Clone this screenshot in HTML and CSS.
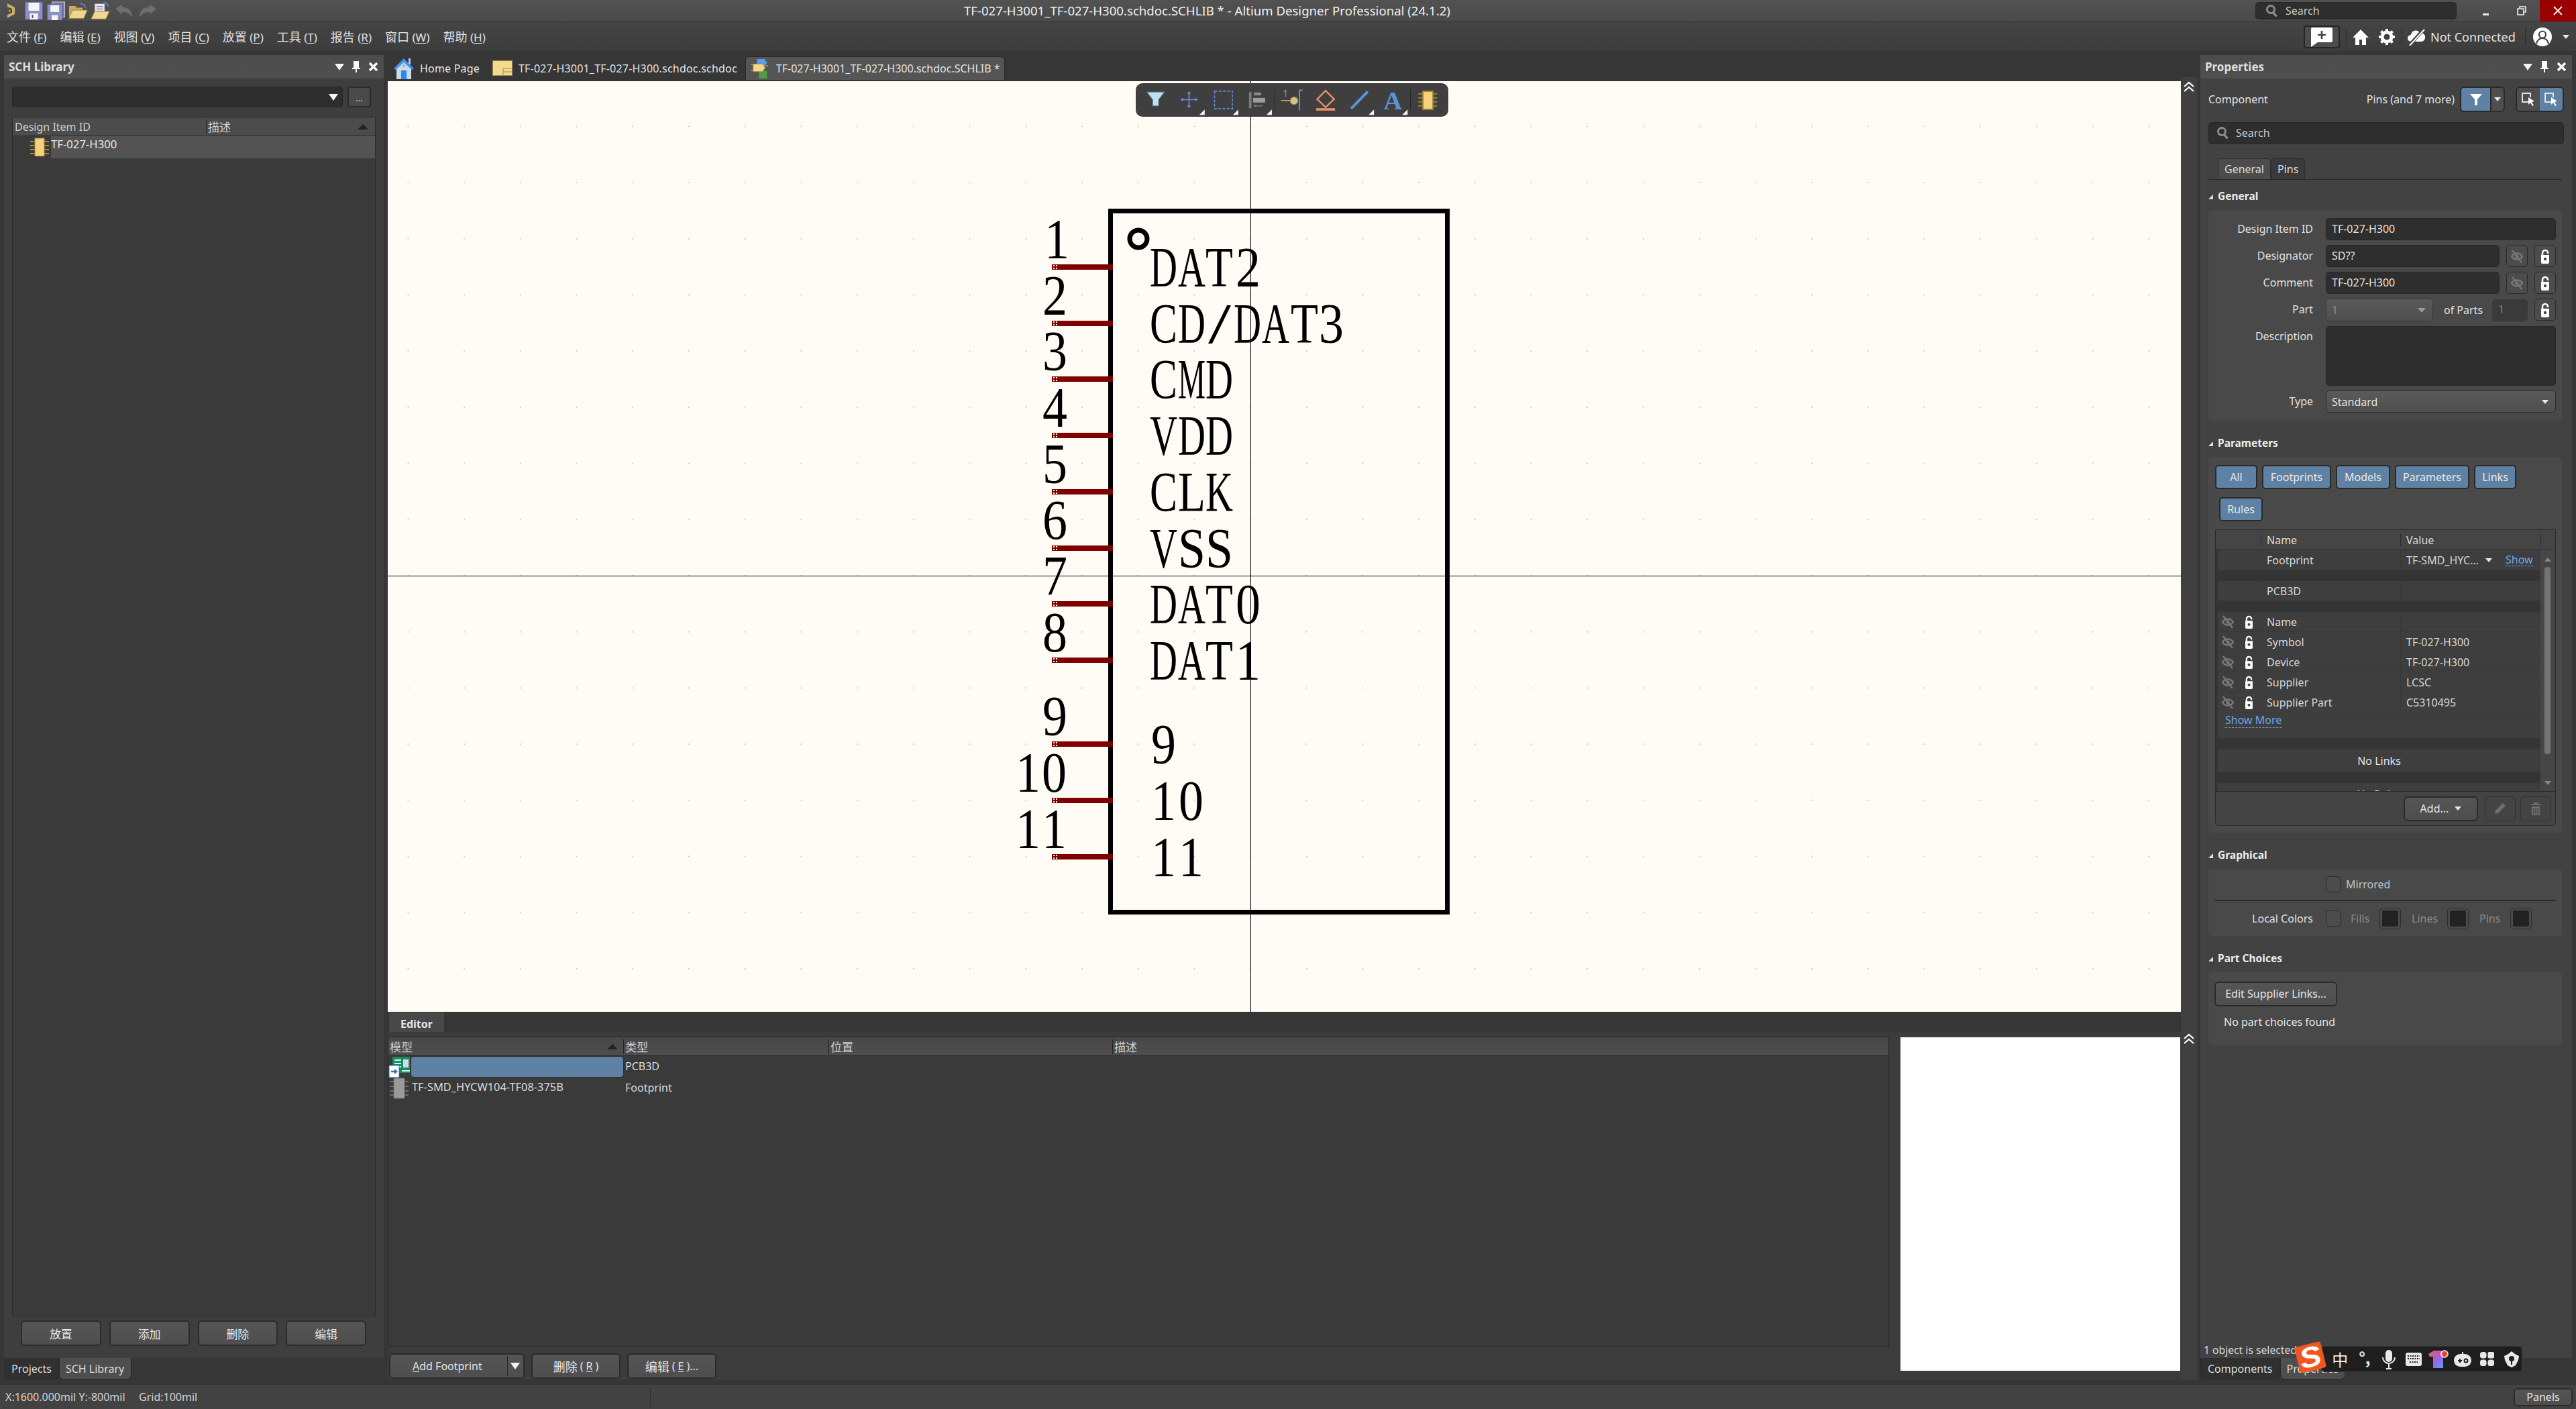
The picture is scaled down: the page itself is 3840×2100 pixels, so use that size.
FILE: index.html
```html
<!DOCTYPE html>
<html lang="en">
<head>
<meta charset="utf-8">
<title>Altium Designer</title>
<link rel="stylesheet" href="styles.css">
</head>
<body>
<svg class="defs" width="0" height="0" aria-hidden="true">
  <symbol id="lock" viewBox="0 0 14 22"><path d="M3 10V6a4 4 0 0 1 8 0v1" fill="none" stroke="#fff" stroke-width="2.6"/><path d="M1 9h12v11a2 2 0 0 1-2 2H3a2 2 0 0 1-2-2z" fill="#fff"/><circle cx="7" cy="15" r="2.2" fill="#444"/></symbol>
  <symbol id="eye" viewBox="0 0 18 20"><path d="M1 10c4-6 12-6 16 0-4 6-12 6-16 0z" fill="none" stroke="#777" stroke-width="2.4"/><circle cx="9" cy="10" r="2.6" fill="#777"/><path d="M2 1l14 18" stroke="#777" stroke-width="2.4"/></symbol>
  <symbol id="search" viewBox="0 0 18 20"><circle cx="8" cy="8" r="5.5" fill="none" stroke="#8c8c8c" stroke-width="3"/><path d="M11.5 12.5l5 6" stroke="#8c8c8c" stroke-width="3.4"/></symbol>
  <symbol id="pick" viewBox="0 0 22 22"><path d="M11 15H2V2h12v6" fill="none" stroke="#e4e4e4" stroke-width="2"/><path d="M11 8l9 6-4 1 3 5-2 1-3-5-3 3z" fill="#fff"/></symbol>
</svg>

<div class="app">
  <header class="titlebar">
    <div class="qat">
      <svg class="logo" viewBox="0 0 17 24"><path d="M3 1l11 6v10L3 23v-5l7-3V9L3 6z" fill="#c9b06a"/><path d="M5 10l3 2-3 2z" fill="#c9b06a"/></svg>
      <svg class="qi" viewBox="0 0 28 28"><rect x="1" y="1" width="26" height="26" fill="#8d90c6" stroke="#5c5f90"/><rect x="6" y="2" width="16" height="12" fill="#f4f4f4"/><rect x="8" y="18" width="12" height="9" fill="#f4f4f4"/><rect x="11" y="20" width="2" height="5" fill="#555"/></svg>
      <svg class="qi" viewBox="0 0 30 30"><rect x="9" y="1" width="20" height="24" fill="#777aa8" stroke="#d8d8e4"/><rect x="1" y="5" width="24" height="25" fill="#8d90c6" stroke="#5c5f90"/><rect x="6" y="6" width="14" height="11" fill="#f4f4f4"/><rect x="8" y="22" width="10" height="8" fill="#f4f4f4"/></svg>
      <svg class="qi" viewBox="0 0 33 28"><path d="M1 27V6h11l2 3h10v18z" fill="#c9a860"/><path d="M1 27L7 13h25l-6 14z" fill="#f0d690" stroke="#9a8040"/><path d="M20 2q8 0 9 8" fill="none" stroke="#5a8cc0" stroke-width="2"/></svg>
      <svg class="qi" viewBox="0 0 33 30"><rect x="7" y="3" width="17" height="20" fill="#e8e8f0" stroke="#7a7a90"/><path d="M10 8h11M10 12h11M10 16h11" stroke="#6a7aa0" stroke-width="1.4"/><path d="M1 29l6-13h25l-6 13z" fill="#f0d690" stroke="#9a8040"/><path d="M22 1q7 0 8 7" fill="none" stroke="#5a8cc0" stroke-width="2"/></svg>
      <svg class="qi dim" viewBox="0 0 30 24"><path d="M1 9l11-8v5q16 1 16 17-5-9-16-9v4z" fill="#6f6f6f"/></svg>
      <svg class="qi dim" viewBox="0 0 30 24"><path d="M29 9L18 1v5Q2 7 2 23q5-9 16-9v4z" fill="#6f6f6f"/></svg>
    </div>
    <div class="wintitle">TF-027-H3001_TF-027-H300.schdoc.SCHLIB * - Altium Designer Professional (24.1.2)</div>
    <div class="topsearch"><svg class="ic18"><use href="#search"/></svg><span>Search</span></div>
    <div class="winctl">
      <div class="winbtn"><span class="minbar"></span></div>
      <div class="winbtn"><svg class="ic14" viewBox="0 0 14 14"><path d="M4 3V1h9v8h-3M1 4h9v9H1z" fill="none" stroke="#eee" stroke-width="1.6"/></svg></div>
      <div class="winbtn close"><svg class="ic14" viewBox="0 0 14 14"><path d="M1 1l12 12M13 1L1 13" stroke="#fff" stroke-width="1.8"/></svg></div>
    </div>
  </header>

  <nav class="menubar">
    <div class="menu">
      <span><b class="zh">文件</b> (<u>F</u>)</span>
      <span><b class="zh">编辑</b> (<u>E</u>)</span>
      <span><b class="zh">视图</b> (<u>V</u>)</span>
      <span><b class="zh">项目</b> (<u>C</u>)</span>
      <span><b class="zh">放置</b> (<u>P</u>)</span>
      <span><b class="zh">工具</b> (<u>T</u>)</span>
      <span><b class="zh">报告</b> (<u>R</u>)</span>
      <span><b class="zh">窗口</b> (<u>W</u>)</span>
      <span><b class="zh">帮助</b> (<u>H</u>)</span>
    </div>
    <div class="acct">
      <div class="newbtn"><svg width="34" height="30" viewBox="0 0 34 30"><path d="M3 1h28a2 2 0 0 1 2 2v18a2 2 0 0 1-2 2H11L1 30V3a2 2 0 0 1 2-2z" fill="#fff"/><path d="M17 6v12M11 12h12" stroke="#444" stroke-width="2.6"/></svg></div>
      <i class="vsep"></i>
      <svg class="acct-home" viewBox="0 0 24 24"><path d="M12 1L0 13h4v11h6v-8h4v8h6V13h4z" fill="#fff"/></svg>
      <svg class="acct-gear" viewBox="0 0 24 24"><circle cx="12" cy="12" r="7" fill="none" stroke="#fff" stroke-width="5"/><path d="M12 0v5M12 19v5M0 12h5M19 12h5M3.5 3.5L7 7M17 17l3.500 3.500M20.500 3.500L17 7M7 17l-3.500 3.500" stroke="#fff" stroke-width="4"/></svg>
      <i class="vsep"></i>
      <svg class="acct-cloud" viewBox="0 0 26 26"><path d="M5 20a5 5 0 0 1 0-10 7 7 0 0 1 13-3 6 6 0 0 1 3 13z" fill="#fff"/><path d="M2 26L24 2" stroke="#424242" stroke-width="5"/><path d="M3 26L25 2" stroke="#fff" stroke-width="2"/></svg>
      <span class="notconn">Not Connected</span>
      <i class="vsep"></i>
      <svg class="acct-user" viewBox="0 0 28 28"><circle cx="14" cy="14" r="14" fill="#fff"/><circle cx="14" cy="10.500" r="5" fill="none" stroke="#424242" stroke-width="2.200"/><path d="M5 24q2-8 9-8t9 8" fill="none" stroke="#424242" stroke-width="2.200"/></svg>
      <span class="caret acct-caret"></span>
    </div>
  </nav>

  <main class="workspace">
    <!-- left panel -->
    <section class="leftpanel">
      <div class="phead"><strong>SCH Library</strong><span class="phead-ic"><span class="caret big"></span><svg width="12" height="17" viewBox="0 0 12 17"><path d="M2 0h8v10h2v2H7v5H5v-5H0v-2h2z" fill="#fff"/></svg><svg width="15" height="15" viewBox="0 0 15 15"><path d="M2 2l11 11M13 2L2 13" stroke="#fff" stroke-width="3.400"/></svg></span></div>
      <div class="lbody">
        <div class="lfilter"><div class="lselect"><span class="caret big"></span></div><div class="dots">...</div></div>
        <div class="ltable">
          <div class="lthead"><span class="th-a">Design Item ID</span><span class="th-b zh16">描述</span><span class="sortup"></span></div>
          <div class="ltrow">
            <svg class="chip" viewBox="0 0 28 28"><path d="M0 6h28M0 12h28M0 18h28M0 24h28" stroke="#a08840" stroke-width="2"/><rect x="7" y="1" width="14" height="27" fill="#f6d27c" stroke="#a08840"/></svg>
            <span class="ltname">TF-027-H300</span>
          </div>
        </div>
        <div class="lbtns"><button class="btn zh16">放置</button><button class="btn zh16">添加</button><button class="btn zh16">删除</button><button class="btn zh16">编辑</button></div>
      </div>
      <div class="btabs"><span class="btab">Projects</span><span class="btab on">SCH Library</span></div>
    </section>

    <!-- centre -->
    <section class="center">
      <div class="doctabs">
        <div class="dtab">
          <svg class="ic-home" viewBox="0 0 30 33"><rect x="22" y="2" width="3" height="9" fill="#bcd"/><path d="M4 15L15 5l11 10v18H4z" fill="#c9dbe8"/><path d="M0 17L15 2l15 15-3 2L15 8 3 19z" fill="#3f92ee"/><rect x="11" y="20" width="8" height="13" fill="#2a86f0"/><circle cx="15" cy="13" r="1.600" fill="#7f9fb8"/></svg>
          <span>Home Page</span>
        </div>
        <div class="dtab">
          <svg class="ic-doc" viewBox="0 0 30 23"><rect x=".5" y=".5" width="29" height="22" fill="#f2d98c" stroke="#a08c50"/><path d="M16 22V12h14M16 17h14" fill="none" stroke="#a08c50"/></svg>
          <span>TF-027-H3001_TF-027-H300.schdoc.schdoc</span>
        </div>
        <div class="dtab on">
          <svg class="ic-lib" viewBox="0 0 32 32"><rect x="13" y="20" width="13" height="12" fill="#4ea040"/><path d="M10 1h12l4 6-4 6H10z" fill="#5a9cf0"/><path d="M0 10h6M0 19h6M24 12h4" stroke="#a89040" stroke-width="2"/><path d="M4 9h15l4 6-4 6H4z" fill="#f4d98a" stroke="#a89040"/></svg>
          <span>TF-027-H3001_TF-027-H300.schdoc.SCHLIB *</span>
        </div>
      </div>

      <div class="canvas">
        <svg class="sheet" viewBox="578 121 2673 1387" width="2673" height="1387">
          <defs><pattern id="grid" patternUnits="userSpaceOnUse" x="1863" y="857" width="83.700" height="83.700"><rect width="2" height="2" fill="#cfcec8"/></pattern></defs>
          <rect x="578" y="121" width="2673" height="1387" fill="url(#grid)"/>
          <rect x="1655.500" y="314.500" width="502" height="1045" fill="none" stroke="#000" stroke-width="7"/>
          <circle cx="1697" cy="356" r="13" fill="none" stroke="#000" stroke-width="7"/>
          <g class="pins">
            <path d="M1568 398h91M1568 482h91M1568 565h91M1568 649h91M1568 733h91M1568 817h91M1568 900h91M1568 984h91M1568 1109h91M1568 1193h91M1568 1277h91"/>
          </g>
          <path class="hots" d="M1570 395h2v2h-2zM1574 395h2v2h-2zM1570 399h2v2h-2zM1574 399h2v2h-2zM1570 479h2v2h-2zM1574 479h2v2h-2zM1570 483h2v2h-2zM1574 483h2v2h-2zM1570 562h2v2h-2zM1574 562h2v2h-2zM1570 566h2v2h-2zM1574 566h2v2h-2zM1570 646h2v2h-2zM1574 646h2v2h-2zM1570 650h2v2h-2zM1574 650h2v2h-2zM1570 730h2v2h-2zM1574 730h2v2h-2zM1570 734h2v2h-2zM1574 734h2v2h-2zM1570 814h2v2h-2zM1574 814h2v2h-2zM1570 818h2v2h-2zM1574 818h2v2h-2zM1570 897h2v2h-2zM1574 897h2v2h-2zM1570 901h2v2h-2zM1574 901h2v2h-2zM1570 981h2v2h-2zM1574 981h2v2h-2zM1570 985h2v2h-2zM1574 985h2v2h-2zM1570 1106h2v2h-2zM1574 1106h2v2h-2zM1570 1110h2v2h-2zM1574 1110h2v2h-2zM1570 1190h2v2h-2zM1574 1190h2v2h-2zM1570 1194h2v2h-2zM1574 1194h2v2h-2zM1570 1274h2v2h-2zM1574 1274h2v2h-2zM1570 1278h2v2h-2zM1574 1278h2v2h-2z"/>
          <g class="sym">
            <text y="385"><tspan x="1557" textLength="37" lengthAdjust="spacingAndGlyphs">1</tspan></text>
            <text y="469"><tspan x="1554" textLength="37" lengthAdjust="spacingAndGlyphs">2</tspan></text>
            <text y="552"><tspan x="1554" textLength="37" lengthAdjust="spacingAndGlyphs">3</tspan></text>
            <text y="636"><tspan x="1554" textLength="37" lengthAdjust="spacingAndGlyphs">4</tspan></text>
            <text y="720"><tspan x="1554" textLength="37" lengthAdjust="spacingAndGlyphs">5</tspan></text>
            <text y="804"><tspan x="1554" textLength="37" lengthAdjust="spacingAndGlyphs">6</tspan></text>
            <text y="887"><tspan x="1554" textLength="37" lengthAdjust="spacingAndGlyphs">7</tspan></text>
            <text y="971"><tspan x="1554" textLength="37" lengthAdjust="spacingAndGlyphs">8</tspan></text>
            <text y="1096"><tspan x="1554" textLength="37" lengthAdjust="spacingAndGlyphs">9</tspan></text>
            <text y="1180"><tspan x="1514" textLength="37" lengthAdjust="spacingAndGlyphs">1</tspan><tspan x="1553" textLength="37" lengthAdjust="spacingAndGlyphs">0</tspan></text>
            <text y="1264"><tspan x="1514" textLength="37" lengthAdjust="spacingAndGlyphs">1</tspan><tspan x="1553" textLength="37" lengthAdjust="spacingAndGlyphs">1</tspan></text>

            <text y="427"><tspan x="1714" textLength="41" lengthAdjust="spacingAndGlyphs">D</tspan><tspan x="1756" textLength="41" lengthAdjust="spacingAndGlyphs">A</tspan><tspan x="1797" textLength="41" lengthAdjust="spacingAndGlyphs">T</tspan><tspan x="1842" textLength="37" lengthAdjust="spacingAndGlyphs">2</tspan></text>
            <text y="511"><tspan x="1714" textLength="41" lengthAdjust="spacingAndGlyphs">C</tspan><tspan x="1756" textLength="41" lengthAdjust="spacingAndGlyphs">D</tspan><tspan x="1801" textLength="34" lengthAdjust="spacingAndGlyphs">/</tspan><tspan x="1839" textLength="41" lengthAdjust="spacingAndGlyphs">D</tspan><tspan x="1881" textLength="41" lengthAdjust="spacingAndGlyphs">A</tspan><tspan x="1924" textLength="41" lengthAdjust="spacingAndGlyphs">T</tspan><tspan x="1966" textLength="37" lengthAdjust="spacingAndGlyphs">3</tspan></text>
            <text y="594"><tspan x="1714" textLength="41" lengthAdjust="spacingAndGlyphs">C</tspan><tspan x="1756" textLength="41" lengthAdjust="spacingAndGlyphs">M</tspan><tspan x="1797" textLength="41" lengthAdjust="spacingAndGlyphs">D</tspan></text>
            <text y="678"><tspan x="1714" textLength="41" lengthAdjust="spacingAndGlyphs">V</tspan><tspan x="1756" textLength="41" lengthAdjust="spacingAndGlyphs">D</tspan><tspan x="1797" textLength="41" lengthAdjust="spacingAndGlyphs">D</tspan></text>
            <text y="762"><tspan x="1714" textLength="41" lengthAdjust="spacingAndGlyphs">C</tspan><tspan x="1756" textLength="41" lengthAdjust="spacingAndGlyphs">L</tspan><tspan x="1797" textLength="41" lengthAdjust="spacingAndGlyphs">K</tspan></text>
            <text y="846"><tspan x="1714" textLength="41" lengthAdjust="spacingAndGlyphs">V</tspan><tspan x="1756" textLength="41" lengthAdjust="spacingAndGlyphs">S</tspan><tspan x="1797" textLength="41" lengthAdjust="spacingAndGlyphs">S</tspan></text>
            <text y="929"><tspan x="1714" textLength="41" lengthAdjust="spacingAndGlyphs">D</tspan><tspan x="1756" textLength="41" lengthAdjust="spacingAndGlyphs">A</tspan><tspan x="1797" textLength="41" lengthAdjust="spacingAndGlyphs">T</tspan><tspan x="1842" textLength="37" lengthAdjust="spacingAndGlyphs">0</tspan></text>
            <text y="1013"><tspan x="1714" textLength="41" lengthAdjust="spacingAndGlyphs">D</tspan><tspan x="1756" textLength="41" lengthAdjust="spacingAndGlyphs">A</tspan><tspan x="1797" textLength="41" lengthAdjust="spacingAndGlyphs">T</tspan><tspan x="1842" textLength="37" lengthAdjust="spacingAndGlyphs">1</tspan></text>
            <text y="1138"><tspan x="1716" textLength="37" lengthAdjust="spacingAndGlyphs">9</tspan></text>
            <text y="1222"><tspan x="1716" textLength="37" lengthAdjust="spacingAndGlyphs">1</tspan><tspan x="1757" textLength="37" lengthAdjust="spacingAndGlyphs">0</tspan></text>
            <text y="1306"><tspan x="1716" textLength="37" lengthAdjust="spacingAndGlyphs">1</tspan><tspan x="1757" textLength="37" lengthAdjust="spacingAndGlyphs">1</tspan></text>
          </g>
          <path class="xhair" d="M1864.500 121V1508M578 858.500H3251"/>
        </svg>

        <div class="tools">
          <svg viewBox="40 27 1396 149" width="466" height="50">
            <path d="M90 66h78l-26 34v28h-26v-28z" fill="#bfe0ee" stroke="#5d8ea2" stroke-width="3"/>
            <path d="M278 68v66M246 100h66" stroke="#6a8fd8" stroke-width="5"/><path d="M278 62l-8 12h16zM278 138l-8-12h16zM240 100l12-8v16zM318 100l-12-8v16z" fill="#6a8fd8"/>
            <rect x="392" y="62" width="80" height="78" fill="none" stroke="#6288de" stroke-width="5" stroke-dasharray="12 7"/>
            <rect x="546" y="66" width="11" height="72" fill="#7c7c7c"/><rect x="568" y="68" width="32" height="13" fill="#8c8c8c"/><rect x="564" y="92" width="54" height="21" fill="#9c9c9c"/><path d="M572 128h34" stroke="#7c7c7c" stroke-width="4"/><path d="M566 128l10-6v12z" fill="#7c7c7c"/>
            <path d="M661 54v94M1267 54v94" stroke="#222" stroke-width="3"/>
            <path d="M702 66l8-8v30" fill="none" stroke="#8c8c8c" stroke-width="4"/><path d="M690 104h40" stroke="#c2a464" stroke-width="5"/><circle cx="747" cy="105" r="17" fill="#d8c088" stroke="#a08850" stroke-width="3"/><path d="M786 58h-15v90" fill="none" stroke="#5b8fd0" stroke-width="6"/>
            <path d="M888 60l38 38-38 36-38-36z" fill="none" stroke="#e8906c" stroke-width="7"/><rect x="846" y="138" width="84" height="11" fill="#e8906c"/>
            <path d="M1002 140l74-76" stroke="#5a94d8" stroke-width="12"/>
            <text class="toola" x="1188" y="142">A</text>
            <path d="M1302 74h84M1302 92h84M1302 110h84M1302 128h84" stroke="#a08840" stroke-width="5"/><rect x="1322" y="62" width="46" height="82" fill="#f8d078" stroke="#907838" stroke-width="6"/>
            <path d="M324 168h24v-24zM474 168h24v-24zM624 168h24v-24zM1080 168h24v-24zM1230 168h24v-24z" fill="#f4f4f4"/>
          </svg>
        </div>
      </div>

      <div class="editor">
        <div class="edtabs"><span class="edtab">Editor</span></div>
        <div class="edbody">
          <div class="edleft">
            <div class="mtable">
              <div class="mthead"><span class="mh1 zh16">模型<i class="sortup"></i></span><span class="mh2 zh16">类型</span><span class="mh3 zh16">位置</span><span class="mh4 zh16">描述</span></div>
              <div class="mrow"><span class="mc1"><svg class="ic-mod" viewBox="0 0 32 32"><rect x="6" y="1" width="26" height="24" fill="#1e8a60"/><rect x="22" y="5" width="8" height="12" fill="#cde"/><path d="M9 6h10M9 11h10M9 16h10M20 22h12" stroke="#cfe" stroke-width="2"/><rect x="1" y="14" width="15" height="18" fill="#fff" stroke="#2b6ecb"/><path d="M4 23h7" stroke="#2b6ecb" stroke-width="2.500"/><path d="M9 19l5 4-5 4z" fill="#2b6ecb"/></svg><span class="mname sel"></span></span><span class="mc2">PCB3D</span></div>
              <div class="mrow"><span class="mc1"><svg class="ic-mod" viewBox="0 0 32 32"><path d="M2 6h28M2 13h28M2 20h28M2 26h28" stroke="#6c6c6c" stroke-width="2"/><rect x="8" y="1" width="16" height="30" rx="1" fill="#9a9a9a" stroke="#6c6c6c"/></svg><span class="mname">TF-SMD_HYCW104-TF08-375B</span></span><span class="mc2">Footprint</span></div>
            </div>
            <div class="edbtns">
              <div class="btn addfp"><span class="addlab"><u>A</u>dd Footprint</span><i class="addsep"></i><span class="caret big"></span></div>
              <button class="btn w133"><b class="zh">删除</b> (<u>R</u>)</button>
              <button class="btn w133"><b class="zh">编辑</b> (<u>E</u>)...</button>
            </div>
          </div>
          <div class="preview"></div>
        </div>
      </div>
    </section>

    <!-- strip -->
    <aside class="strip">
      <div class="strip-a"><svg class="chev" viewBox="0 0 16 16"><path d="M1 8l7-6 7 6M1 15l7-6 7 6" fill="none" stroke="#fff" stroke-width="2.200"/></svg></div>
      <div class="strip-b"><svg class="chev" viewBox="0 0 16 16"><path d="M1 8l7-6 7 6M1 15l7-6 7 6" fill="none" stroke="#fff" stroke-width="2.200"/></svg></div>
    </aside>

    <!-- right panel -->
    <section class="rightpanel">
      <div class="phead"><strong>Properties</strong><span class="phead-ic"><span class="caret big"></span><svg width="12" height="17" viewBox="0 0 12 17"><path d="M2 0h8v10h2v2H7v5H5v-5H0v-2h2z" fill="#fff"/></svg><svg width="15" height="15" viewBox="0 0 15 15"><path d="M2 2l11 11M13 2L2 13" stroke="#fff" stroke-width="3.400"/></svg></span></div>
      <div class="rbody">
        <div class="compline">
          <span class="complab">Component</span>
          <span class="compsel">Pins (and 7 more)</span>
          <div class="seg fseg"><span class="segblue"><svg width="18" height="18" viewBox="0 0 18 18"><path d="M0 1h18l-7 8v9H7V9z" fill="#fff"/></svg></span><span class="segdrop"><span class="caret"></span></span></div>
          <div class="seg pseg"><span class="seggray"><svg class="ic22"><use href="#pick"/></svg></span><span class="segblue"><svg class="ic22"><use href="#pick"/></svg></span></div>
        </div>
        <div class="rsearch"><svg class="ic18"><use href="#search"/></svg><span>Search</span></div>
        <div class="rtabs"><span class="rtab on">General</span><span class="rtab">Pins</span></div>

        <h3 class="sect first"><i class="tri"></i>General</h3>
        <div class="grp fields">
          <label>Design Item ID</label><div class="inp span3">TF-027-H300</div>
          <label>Designator</label><div class="inp">SD??</div><span class="sq"><svg class="ic-eye"><use href="#eye"/></svg></span><span class="sq"><svg class="ic-lock"><use href="#lock"/></svg></span>
          <label>Comment</label><div class="inp">TF-027-H300</div><span class="sq"><svg class="ic-eye"><use href="#eye"/></svg></span><span class="sq"><svg class="ic-lock"><use href="#lock"/></svg></span>
          <label>Part</label>
          <div class="partline"><div class="sel dis"><span>1</span><span class="caret gray"></span></div><span class="ofparts">of Parts</span><div class="inp dis2">1</div></div>
          <span class="sq"><svg class="ic-lock"><use href="#lock"/></svg></span>
          <label class="toplab">Description</label><div class="inp span3"></div>
          <label>Type</label><div class="sel span3"><span>Standard</span><span class="caret"></span></div>
        </div>

        <h3 class="sect"><i class="tri"></i>Parameters</h3>
        <div class="grp params">
          <div class="chips"><span class="chipb w63">All</span><span class="chipb w103">Footprints</span><span class="chipb w80">Models</span><span class="chipb w110">Parameters</span><span class="chipb w63">Links</span></div>
          <div class="chips second"><span class="chipb w65">Rules</span></div>
          <div class="ptable">
            <div class="pthead"><span></span><span>Name</span><span>Value</span><span></span></div>
            <div class="ptbody">
              <div class="ptrows">
                <div class="prow"><span class="pico"></span><span>Footprint</span><span class="pval"><span class="fpv">TF-SMD_HYC...</span><span class="caret"></span><a class="lnk">Show</a></span></div>
                <div class="pgap"></div>
                <div class="prow"><span class="pico"></span><span>PCB3D</span><span></span></div>
                <div class="pgap"></div>
                <div class="prow"><span class="pico"><svg class="ic-eye"><use href="#eye"/></svg><svg class="ic-lock s"><use href="#lock"/></svg></span><span>Name</span><span></span></div>
                <div class="prow"><span class="pico"><svg class="ic-eye"><use href="#eye"/></svg><svg class="ic-lock s"><use href="#lock"/></svg></span><span>Symbol</span><span>TF-027-H300</span></div>
                <div class="prow"><span class="pico"><svg class="ic-eye"><use href="#eye"/></svg><svg class="ic-lock s"><use href="#lock"/></svg></span><span>Device</span><span>TF-027-H300</span></div>
                <div class="prow"><span class="pico"><svg class="ic-eye"><use href="#eye"/></svg><svg class="ic-lock s"><use href="#lock"/></svg></span><span>Supplier</span><span>LCSC</span></div>
                <div class="prow"><span class="pico"><svg class="ic-eye"><use href="#eye"/></svg><svg class="ic-lock s"><use href="#lock"/></svg></span><span>Supplier Part</span><span>C5310495</span></div>
                <div class="pmore"><a class="lnk">Show More</a></div>
                <div class="pgap"></div>
                <div class="pnone">No Links</div>
                <div class="pgap"></div>
                <div class="pcut">No Rules</div>
              </div>
              <div class="pscroll"><i class="sup"></i><i class="sthumb"></i><i class="sdown"></i></div>
            </div>
            <div class="ptfoot">
              <div class="btn addb">Add...<span class="caret"></span></div>
              <span class="fbtn"><svg width="18" height="18" viewBox="0 0 18 18"><path d="M1 17l1-5L13 1l4 4L6 16z" fill="#6e6e6e"/></svg></span>
              <span class="fbtn"><svg width="14" height="19" viewBox="0 0 14 19"><path d="M0 3h14M5 3V1h4v2" fill="none" stroke="#6e6e6e" stroke-width="2"/><path d="M1 6h12v13H1z" fill="#6e6e6e"/><path d="M4 8v9M7 8v9M10 8v9" stroke="#444" stroke-width="1.200"/></svg></span>
            </div>
          </div>
        </div>

        <h3 class="sect"><i class="tri"></i>Graphical</h3>
        <div class="grp graph">
          <div class="grow1"><span class="chk"></span><span class="dimtxt">Mirrored</span></div>
          <div class="grule"></div>
          <div class="grow2"><label>Local Colors</label><span class="chk"></span><span class="gl w1">Fills</span><span class="sw"></span><span class="gl">Lines</span><span class="sw"></span><span class="gl w3">Pins</span><span class="sw"></span></div>
        </div>

        <h3 class="sect"><i class="tri"></i>Part Choices</h3>
        <div class="grp partch">
          <div class="btn edit">Edit Supplier Links...</div>
          <div class="nopart">No part choices found</div>
        </div>

        <div class="rfill"></div>
        <div class="objsel">1 object is selected</div>
      </div>
      <div class="btabs r"><span class="btab">Components</span><span class="btab on">Properties</span></div>
    </section>
  </main>

  <footer class="status">
    <span class="coord">X:1600.000mil Y:-800mil</span><span class="gridv">Grid:100mil</span><i class="stsep"></i>
    <span class="btn panels">Panels</span>
  </footer>

  <div class="ime">
    <div class="imelogo"><span>S</span></div>
    <span class="imet zhb">中</span>
    <span class="imet p">°,</span>
    <svg width="20" height="30" viewBox="0 0 20 30"><rect x="5" y="1" width="10" height="18" rx="5" fill="#e8e8e8"/><path d="M1 12a9 9 0 0 0 18 0M10 22v6M6 29h8" fill="none" stroke="#e8e8e8" stroke-width="2"/></svg>
    <svg width="24" height="20" viewBox="0 0 24 20"><rect width="24" height="20" rx="3" fill="#e8e8e8"/><path d="M3 5h18M3 9h18M6 14h12" stroke="#1e1e1e" stroke-width="2" stroke-dasharray="2 1.500"/></svg>
    <svg class="shirt" width="30" height="28" viewBox="0 0 30 28"><defs><linearGradient id="sg" x1="0" y1="0" x2="1" y2="1"><stop offset="0" stop-color="#f0604a"/><stop offset=".5" stop-color="#a060e8"/><stop offset="1" stop-color="#40b0f0"/></linearGradient></defs><path d="M0 6l8-5h12l4 3 3 4-5 2v17H7V10L2 10z" fill="url(#sg)"/><circle cx="24" cy="6" r="5" fill="#f04030" stroke="#fff" stroke-width="1.500"/></svg>
    <svg width="26" height="24" viewBox="0 0 26 24"><path d="M13 1v4" stroke="#e8e8e8" stroke-width="2"/><rect y="4" width="26" height="19" rx="9.500" fill="#e8e8e8"/><path d="M6 14h6M9 11v6" stroke="#1e1e1e" stroke-width="2"/><circle cx="18" cy="14" r="2.500" fill="none" stroke="#1e1e1e" stroke-width="2"/></svg>
    <svg width="21" height="21" viewBox="0 0 21 21"><rect width="9.500" height="9.500" rx="3.500" fill="#e8e8e8"/><rect x="11.500" width="9.500" height="9.500" rx="2" fill="#e8e8e8"/><rect y="11.500" width="9.500" height="9.500" rx="3.500" fill="#e8e8e8"/><rect x="11.500" y="11.500" width="9.500" height="9.500" rx="3.500" fill="#e8e8e8"/></svg>
    <svg width="22" height="24" viewBox="0 0 22 24"><path d="M11 0l5 4 6 3-1 6-4 8-6 3-6-3-4-8-1-6 6-3z" fill="#e8e8e8"/><circle cx="11" cy="11" r="4" fill="#1e1e1e"/><path d="M11 11v9" stroke="#1e1e1e" stroke-width="2"/></svg>
  </div>
</div>
</body>
</html>
```

FILE: styles.css
```css
* { box-sizing: border-box; }
html, body { margin: 0; padding: 0; }
body {
  width: 3840px; height: 2100px; overflow: hidden;
  background: #363636; color: #e2e2e2;
  font: 16px/1 "Noto Sans", "Noto Sans CJK SC", sans-serif;
}
.defs { position: absolute; }
.app { position: relative; width: 3840px; height: 2100px; display: flex; flex-direction: column; }
svg { display: block; flex: none; }
u { text-underline-offset: 2px; }
button { font: inherit; color: inherit; }
.zh { font-weight: 400; font-size: 18px; font-family: "Noto Sans CJK SC", sans-serif; }
.zh16 { font-size: 17px; font-family: "Noto Sans CJK SC", sans-serif; }

/* title bar */
.titlebar {
  height: 33px; flex: none; display: flex; align-items: center;
  background: linear-gradient(#525252, #4a4a4a); border-bottom: 1px solid #343434;
}
.qat { width: 1437px; flex: none; display: flex; align-items: center; padding-left: 8px; gap: 4px; }
.logo { width: 17px; height: 24px; margin-right: 7px; }
.qi { width: 29px; height: 28px; }
.dim { width: 28px; height: 22px; margin-left: 3px; }
.wintitle { flex: 1; font-size: 18.600px; color: #f0f0f0; white-space: nowrap; }
.topsearch {
  width: 300px; height: 26px; margin-right: 16px; flex: none;
  display: flex; align-items: center; gap: 12px; padding-left: 14px;
  background: #2e2e2e; border: 1px solid #272727; border-radius: 5px; color: #c8c8c8;
}
.ic18 { width: 18px; height: 20px; }
.ic14 { width: 14px; height: 14px; }
.winctl { display: flex; height: 32px; flex: none; }
.winbtn { width: 54px; display: flex; align-items: center; justify-content: center; }
.close { background: #990000; }
.minbar { width: 9px; height: 3px; background: #eee; margin-top: 10px; }

/* menu */
.menubar {
  height: 43px; flex: none; display: flex; justify-content: space-between; align-items: center;
  background: linear-gradient(#444, #3d3d3d); padding: 0 10px;
}
.menu { display: flex; gap: 20px; font-size: 17px; white-space: nowrap; }
.acct { display: flex; align-items: center; }
.newbtn { width: 54px; height: 34px; background: #4c4c4c; border: 2px solid #262626; border-radius: 4px; display: flex; align-items: center; justify-content: center; }
.vsep { width: 1px; height: 25px; background: #2c2c2c; margin: 0 9px; }
.acct-home { width: 24px; height: 24px; }
.acct-gear { width: 24px; height: 24px; margin-left: 15px; margin-right: 1px; }
.acct-cloud { width: 26px; height: 26px; margin-left: -1px; }
.notconn { font-size: 18px; margin-left: 8px; width: 132px; white-space: nowrap; }
.acct-user { width: 28px; height: 28px; margin-left: 2px; }
.acct-caret { margin-left: 16px; }
.caret { display: inline-block; width: 0; height: 0; border-left: 5.500px solid transparent; border-right: 5.500px solid transparent; border-top: 6px solid #e8e8e8; flex: none; }
.caret.big { border-left-width: 7px; border-right-width: 7px; border-top: 10px solid #f4f4f4; }
.caret.gray { border-top-color: #9a9a9a; border-left-width: 6px; border-right-width: 6px; border-top-width: 7px; }

/* workspace */
.workspace { flex: 1; min-height: 0; display: flex; padding: 6px 6px 0; background: #363636; }

.phead {
  height: 35px; flex: none; display: flex; align-items: center; justify-content: space-between;
  padding: 0 8px 0 7px; background: linear-gradient(#4c4c4c, #505050);
}
.phead strong { font-size: 17px; font-weight: 700; color: #dedede; }
.phead-ic { display: flex; align-items: center; gap: 12px; }

.leftpanel { width: 566px; flex: none; display: flex; flex-direction: column; }
.lbody { flex: 1; min-height: 0; display: flex; flex-direction: column; background: #3e3e3e; padding: 12px 12px 18px; }
.lfilter { display: flex; gap: 7px; height: 31px; margin-bottom: 14px; padding-right: 7px; }
.lselect { flex: 1; background: #2e2e2e; border: 1px solid #262626; border-radius: 4px; display: flex; align-items: center; justify-content: flex-end; padding-right: 6px; }
.dots { width: 35px; background: #4a4a4a; border: 2px solid #2a2a2a; border-radius: 4px; text-align: center; line-height: 30px; font-size: 13px; }
.ltable { flex: 1; min-height: 0; border: 1px solid #2a2a2a; background: #3a3a3a; }
.lthead { height: 28px; position: relative; display: flex; align-items: center; background: #4c4c4c; border-bottom: 1px solid #282828; color: #cfcfcf; }
.th-a { width: 289px; padding-left: 3px; border-right: 1px solid #282828; line-height: 22px; white-space: nowrap; }
.th-b { padding-left: 2px; }
.sortup { position: absolute; right: 10px; top: 10px; width: 0; height: 0; border-left: 8px solid transparent; border-right: 8px solid transparent; border-bottom: 8px solid #222; }
.ltrow { height: 33px; display: flex; align-items: flex-start; padding-left: 26px; }
.chip { width: 28px; height: 28px; margin-top: 2px; }
.ltname { flex: 1; height: 33px; background: #535353; margin-left: 3px; padding-top: 4px; color: #e8e8e8; font-size: 16.700px; }
.lbtns { display: flex; gap: 12px; height: 38px; margin-top: 6px; padding: 0 14px 0 13px; }
.btn {
  background: linear-gradient(#555, #4e4e4e); border: 2px solid #2b2b2b; border-radius: 6px;
  display: flex; align-items: center; justify-content: center; white-space: nowrap; color: #e6e6e6;
}
.lbtns .btn { flex: 1; }
.btabs { height: 32px; flex: none; display: flex; margin-bottom: 8px; padding-left: 1px; background: #363636; }
.btab { display: flex; align-items: center; padding: 0 10px 0 9px; background: #303030; border: 1px solid #2a2a2a; border-top: 0; border-radius: 0 0 6px 6px; color: #ddd; white-space: nowrap; }
.btab.on { background: #4e4e4e; }

/* centre */
.center { width: 2673px; flex: none; margin-left: 6px; display: flex; flex-direction: column; }
.doctabs { height: 39px; flex: none; display: flex; align-items: flex-end; padding-bottom: 2px; }
.dtab { height: 35px; display: flex; align-items: center; gap: 9px; padding-left: 9px; white-space: nowrap; color: #e4e4e4; letter-spacing: .2px; }
.dtab + .dtab { margin-left: 11px; padding-left: 8px; }
.dtab.on { margin-left: 12px; padding: 0 6px 0 7px; background: #555; border: 1px solid #2a2a2a; border-bottom: 0; border-radius: 6px 6px 0 0; gap: 8px; letter-spacing: 0; }
.ic-home { width: 30px; height: 33px; }
.ic-doc { width: 30px; height: 23px; }
.ic-lib { width: 30px; height: 32px; }

.canvas { height: 1387px; flex: none; position: relative; background: #fffcf6; overflow: hidden; }
.sym text { font-family: "Liberation Serif", serif; font-size: 85px; fill: #000; }
.pins path { stroke: #800000; stroke-width: 8; fill: none; }
.hots { fill: #fff; }
.xhair { stroke: #000; stroke-width: 1; fill: none; }
.tools { position: absolute; left: 1115px; top: 3px; width: 466px; height: 50px; background: #3f3f3f; border-radius: 10px; }
.toola { font: 700 116px "Liberation Serif", serif; fill: #5a94d8; text-anchor: middle; }

/* editor */
.editor { flex: 1; min-height: 0; display: flex; flex-direction: column; }
.edtabs { height: 30px; flex: none; padding-top: 1px; background: #363636; }
.edtab { display: inline-flex; align-items: center; justify-content: center; width: 82px; height: 29px; margin-left: 2px; padding-top: 5px; background: #484848; font-weight: 700; color: #e6e6e6; font-size: 16px; border-radius: 3px 3px 0 0; }
.edbody { flex: 1; min-height: 0; display: flex; background: #3c3c3c; padding-top: 7px; margin-bottom: 8px; }
.edleft { width: 2238px; flex: none; display: flex; flex-direction: column; }
.mtable { height: 462px; flex: none; border: 1px solid #282828; background: #3a3a3a; }
.mthead { height: 28px; display: flex; align-items: center; background: linear-gradient(#484848, #4e4e4e); border-bottom: 1px solid #282828; color: #cfcfcf; }
.mthead span { position: relative; height: 22px; line-height: 22px; padding-left: 2px; }
.mh1 { width: 351px; border-right: 1px solid #222; }
.mh2 { width: 306px; border-right: 1px solid #222; }
.mh3 { width: 423px; border-right: 1px solid #222; }
.mh1 .sortup { top: 7px; right: 8px; }
.mrow { height: 32px; display: flex; align-items: center; }
.mc1 { width: 351px; flex: none; display: flex; align-items: center; height: 32px; }
.ic-mod { width: 32px; height: 32px; margin-right: 1px; }
.mname { flex: 1; height: 32px; line-height: 28px; padding-left: 2px; white-space: nowrap; color: #dcdcdc; font-size: 16.400px; }
.mname.sel { background: #5f81a3; }
.mc2 { padding: 0 0 3px 2px; color: #dcdcdc; }
.edbtns { display: flex; gap: 10px; height: 38px; margin-top: 10px; padding-left: 2px; }
.addfp { width: 202px; position: relative; justify-content: flex-start; padding-left: 33px; }
.addlab { width: 137px; }
.addsep { width: 1px; height: 30px; background: #2a2a2a; margin: 0 4px 0 4px; }
.w133 { width: 133px; gap: 4px; }
.preview { width: 417px; height: 497px; margin-left: 17px; background: #fff; flex: none; margin-top: 1px; }

.strip { width: 24px; flex: none; margin-right: 5px; padding-top: 33px; display: flex; flex-direction: column; height: 1974px; }
.strip-a, .strip-b { background: #404040; padding: 6px 4px 0; }
.strip-a { height: 1425px; }
.strip-b { flex: 1; padding-top: 0; }
.chev { width: 16px; height: 16px; }

/* right panel */
.rightpanel { width: 554px; flex: none; display: flex; flex-direction: column; }
.rbody { flex: 1; min-height: 0; display: flex; flex-direction: column; background: #424242; padding: 13px 15px 0 12px; }
.compline { height: 37px; flex: none; display: flex; align-items: center; margin-right: -3px; padding-bottom: 1px; }
.complab { flex: 1; }
.compsel { margin-right: 8px; }
.seg { display: flex; height: 38px; border: 2px solid #2a2a2a; border-radius: 6px; overflow: hidden; }
.fseg { margin-right: 16px; }
.segblue { width: 43px; display: flex; align-items: center; justify-content: center; background: #5f81a3; }
.segdrop { width: 20px; display: flex; align-items: center; justify-content: center; background: #4e4e4e; border-left: 2px solid #2a2a2a; }
.pseg .segblue { width: 34px; }
.seggray { width: 34px; display: flex; align-items: center; justify-content: center; background: #4e4e4e; }
.ic22 { width: 22px; height: 22px; }
.rsearch { height: 33px; flex: none; margin-top: 15px; margin-right: -3px; display: flex; align-items: center; gap: 11px; padding: 0 0 2px 11px; background: #2e2e2e; border: 1px solid #272727; border-radius: 5px; color: #c8c8c8; }
.rtabs { height: 32px; flex: none; margin-top: 21px; padding-left: 14px; display: flex; border-bottom: 1px solid #2a2a2a; }
.rtab { height: 31px; display: flex; align-items: center; padding: 0 9px; border: 1px solid #2d2d2d; border-bottom: 0; border-radius: 5px 5px 0 0; background: #3a3a3a; color: #dcdcdc; }
.rtab.on { background: #4c4c4c; width: 79px; justify-content: center; }
.sect { height: 40px; margin: 14px 0 0; display: flex; align-items: center; font-size: 15.500px; font-weight: 700; color: #ececec; flex: none; }
.sect.first { margin-top: 5px; }
.tri { width: 0; height: 0; border-bottom: 7px solid #e0e0e0; border-left: 7px solid transparent; margin-right: 7px; }
.grp { background: #494949; border-radius: 5px; flex: none; }

.fields { display: grid; grid-template-columns: 156px 19px 259px 10px 32px 10px 32px; row-gap: 7px; grid-template-rows: 33px 33px 33px 34px 89px 33px; padding: 12px 9px 12px 0; }
.fields label { grid-column: 1; text-align: right; align-self: center; padding-bottom: 2px; }
.fields .toplab { align-self: start; padding: 7px 0 0; }
.inp { background: #2e2e2e; border: 1px solid #272727; border-radius: 5px; padding: 0 8px 2px; display: flex; align-items: center; color: #e2e2e2; }
.fields .inp, .fields .sel { grid-column: 3; }
.fields .span3 { grid-column: 3 / 8; }
.sq { width: 32px; height: 33px; background: #4c4c4c; border: 1px solid #2a2a2a; border-radius: 5px; display: flex; align-items: center; justify-content: center; }
.fields .inp + .sq { grid-column: 5; }
.fields .sq + .sq { grid-column: 7; }
.fields .partline + .sq { grid-column: 7; }
.ic-eye { width: 18px; height: 20px; }
.ic-lock { width: 14px; height: 22px; }
.ic-lock.s { width: 13px; height: 20px; }
.partline { grid-column: 3 / 6; display: flex; align-items: center; }
.sel { background: linear-gradient(#5a5a5a, #4f4f4f); border: 1px solid #2b2b2b; border-radius: 5px; display: flex; align-items: center; justify-content: space-between; padding: 0 10px 0 8px; }
.sel.dis { width: 160px; height: 34px; color: #8a8a8a; border-color: #3a3a3a; }
.ofparts { width: 72px; margin-left: 16px; white-space: nowrap; }
.fields .partline .inp.dis2 { width: 53px; height: 33px; background: #3a3a3a; color: #7e7e7e; border-color: #3a3a3a; }

.params { height: 560px; padding: 12px 9px 0 10px; }
.chips { display: flex; gap: 7px; height: 36px; }
.chips.second { margin-top: 12px; padding-left: 6px; }
.chipb { background: #5f81a3; border: 2px solid #2a2a2a; border-radius: 5px; display: flex; align-items: center; justify-content: center; color: #eaeaea; }
.w63 { width: 63px; }
.w65 { width: 65px; }
.w80 { width: 81px; }
.w103 { width: 103px; }
.w110 { width: 111px; }
.ptable { margin-top: 12px; height: 442px; border: 1px solid #2a2a2a; border-radius: 0 0 6px 6px; display: flex; flex-direction: column; background: #444; }
.pthead { height: 30px; flex: none; display: grid; grid-template-columns: 67px 208px 209px 1fr; align-items: center; background: #454545; border-bottom: 1px solid #2a2a2a; }
.pthead span { height: 18px; line-height: 18px; border-left: 1px solid #2a2a2a; padding-left: 8px; color: #dcdcdc; }
.pthead span:first-child { border-left: 0; }
.ptbody { height: 360px; flex: none; display: flex; overflow: hidden; border-bottom: 1px solid #2a2a2a; }
.ptrows { width: 484px; flex: none; background: #343434; padding-left: 3px; }
.prow { height: 30px; display: grid; grid-template-columns: 64px 208px 209px; background: #3e3e3e; }
.prow > span { display: flex; align-items: center; border-bottom: 1px solid #383838; border-left: 1px solid #383838; padding-left: 8px; color: #d8d8d8; }
.prow > .pico { border-left: 0; padding-left: 6px; gap: 16px; }
.pval { gap: 8px; }
.fpv { width: 110px; white-space: nowrap; }
.pgap { height: 16px; }
.lnk { color: #6ea6e8; border-bottom: 1px dashed #6ea6e8; line-height: 17px; }
.pval .lnk { margin-left: 12px; }
.pmore { height: 38px; background: #3e3e3e; padding: 3px 0 0 11px; }
.pnone { height: 35px; background: #3e3e3e; display: flex; align-items: center; justify-content: center; color: #e8e8e8; }
.pcut { height: 15px; background: #3e3e3e; text-align: center; padding-top: 9px; overflow: hidden; }
.pscroll { flex: 1; background: #464646; position: relative; }
.sup, .sdown, .sthumb { position: absolute; left: 6px; }
.sup { top: 11px; width: 0; height: 0; border-left: 5px solid transparent; border-right: 5px solid transparent; border-bottom: 6px solid #888; }
.sdown { top: 344px; width: 0; height: 0; border-left: 5px solid transparent; border-right: 5px solid transparent; border-top: 6px solid #888; }
.sthumb { top: 25px; width: 9px; height: 279px; background: #747474; border-radius: 4px; }
.ptfoot { flex: 1; display: flex; align-items: center; justify-content: flex-end; gap: 7px; padding-right: 6px; }
.addb { width: 111px; height: 37px; gap: 9px; margin-right: 3px; }
.fbtn { width: 46px; height: 37px; border: 1px solid #303030; border-radius: 6px; display: flex; align-items: center; justify-content: center; }

.graph { height: 100px; }
.grow1 { height: 46px; display: flex; align-items: center; padding-left: 175px; gap: 7px; }
.chk { width: 23px; height: 24px; background: #4c4c4c; border: 1px solid #2b2b2b; border-radius: 5px; flex: none; }
.dimtxt { color: #c4c4c4; }
.grule { height: 2px; margin: 0 9px; background: #2a2a2a; }
.grow2 { height: 52px; display: flex; align-items: center; }
.grow2 label { width: 156px; text-align: right; margin-right: 19px; flex: none; }
.gl { color: #8a8a8a; width: 37px; margin-left: 16px; white-space: nowrap; flex: none; }
.gl.w1 { margin-left: 14px; width: 27px; }
.gl.w3 { width: 30px; }
.sw { width: 32px; height: 32px; margin-left: 16px; background: #222; border: 4px solid #4a4a4a; outline: 1px solid #2c2c2c; outline-offset: -1px; border-radius: 6px; flex: none; }
.partch { height: 109px; padding: 14px 9px; }
.edit { width: 183px; height: 37px; padding-bottom: 2px; }
.nopart { margin-top: 15px; padding-left: 14px; color: #e6e6e6; }
.rfill { flex: 1; }
.objsel { height: 19px; flex: none; margin-left: -7px; color: #d8d8d8; font-size: 15.700px; white-space: nowrap; }
.btabs.r { padding-left: 0; height: 32px; background: #363636; }
.btabs.r .btab { padding: 0 10px; }
.btabs.r .btab.on { padding: 0 9px; }

/* status bar */
.status { height: 36px; flex: none; display: flex; align-items: center; background: #424242; padding: 0 5px 0 8px; color: #d4d4d4; }
.coord { width: 199px; white-space: nowrap; }
.gridv { width: 762px; white-space: nowrap; }
.stsep { width: 1px; height: 28px; background: #303030; flex: none; }
.panels { margin-left: auto; width: 88px; height: 27px; }

/* IME overlay */
.ime { position: absolute; left: 3460px; top: 2006px; width: 300px; height: 39px; background: #1e1e1e; border: 1px solid #383838; border-radius: 5px; display: grid; grid-template-columns: repeat(8, 36.600px); justify-items: center; align-items: center; padding-left: 9px; }
.imelogo { position: absolute; left: -37px; top: -4px; width: 40px; height: 40px; background: #f0561e; border-radius: 4px; transform: rotate(-14deg); display: flex; align-items: center; justify-content: center; }
.imelogo span { font: italic 900 42px/1 "Liberation Sans", sans-serif; color: #fff; transform: scaleX(1.15); }
.imet { color: #eaeaea; font-family: "Noto Sans CJK SC", sans-serif; font-size: 24px; text-align: center; }
.imet.p { font-size: 24px; font-weight: 700; margin-top: -6px; }
```
